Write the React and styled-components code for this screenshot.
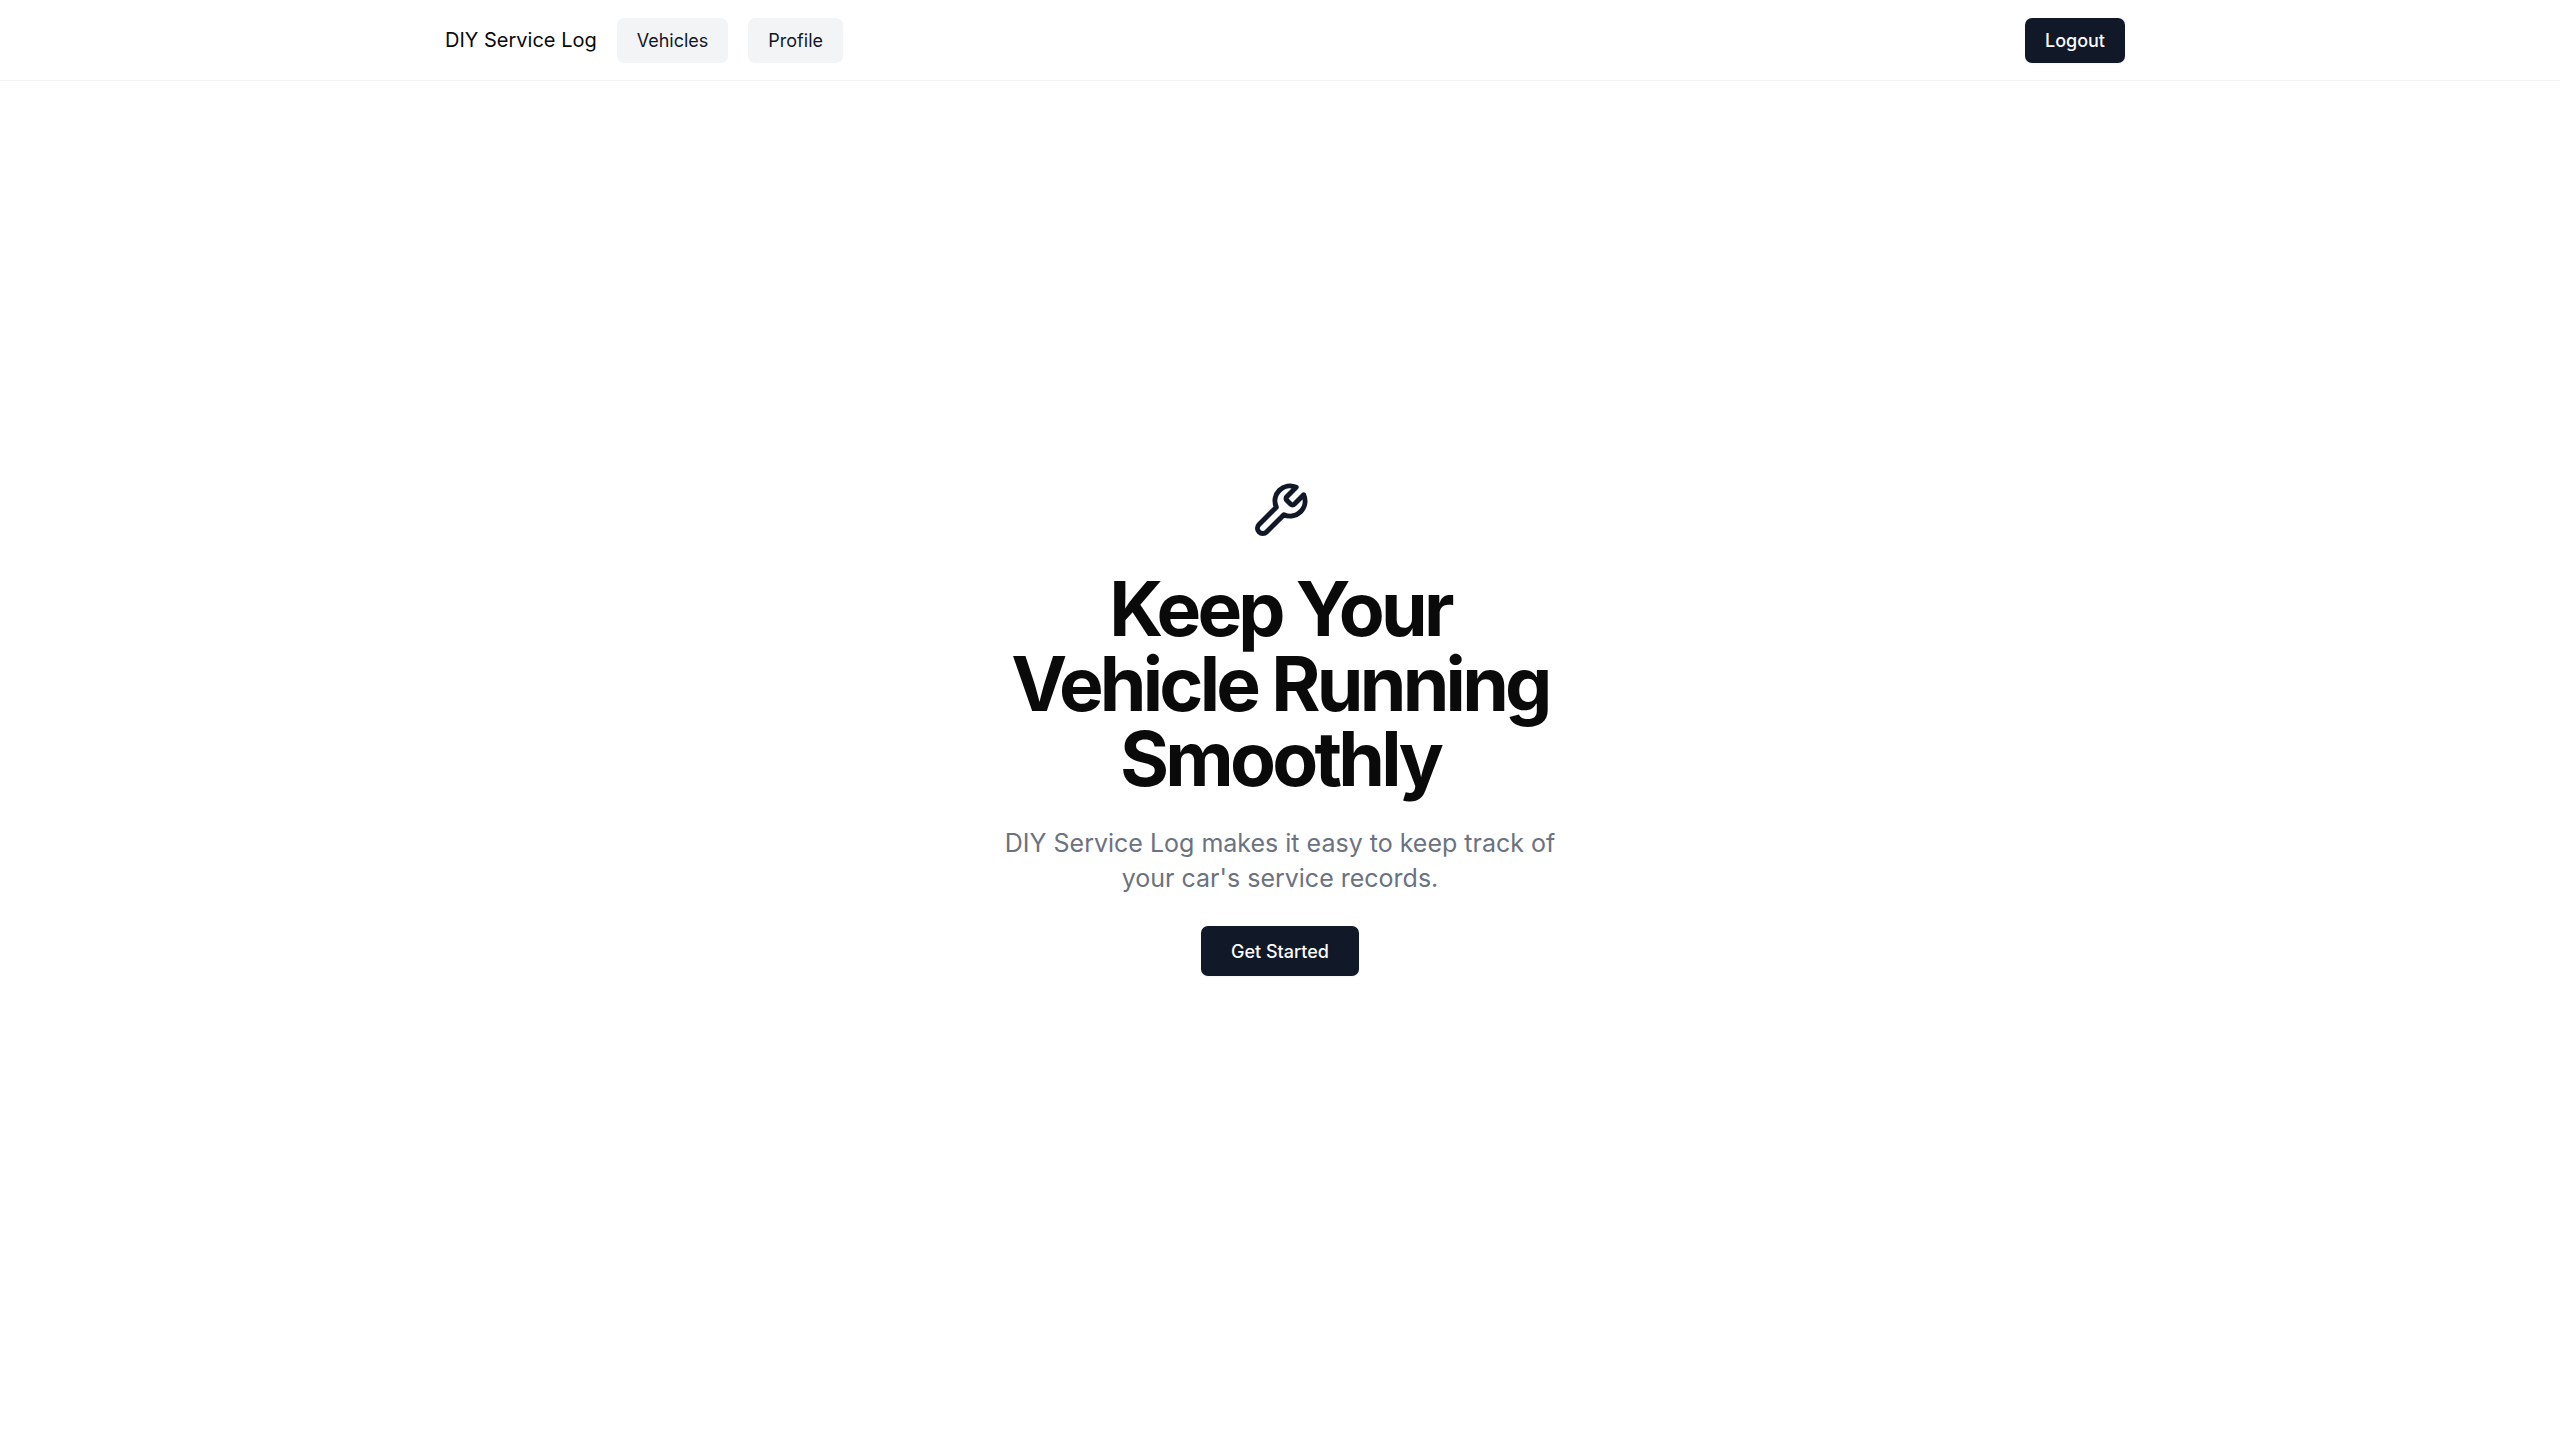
import React from "react";
import styled, { createGlobalStyle } from "styled-components";

const GlobalStyle = createGlobalStyle`
  *, *::before, *::after { box-sizing: border-box; }
  body {
    margin: 0;
    background: #ffffff;
    color: #0a0a0a;
    font-family: Inter, "Liberation Sans", sans-serif;
    font-size: 16px;
    line-height: 24px;
  }
`;

const Page = styled.div`
  display: flex;
  flex-direction: column;
  min-height: 100vh;
`;

const Header = styled.header`
  border-bottom: 1px solid #f3f4f6;
`;

const Bar = styled.div`
  display: flex;
  align-items: center;
  justify-content: space-between;
  max-width: 1760px;
  height: 80px;
  margin: 0 auto;
  padding: 0 35px 0 45px;
`;

const Nav = styled.nav`
  display: flex;
  align-items: center;
  gap: 20px;
`;

const Brand = styled.a`
  color: #0a0a0a;
  font-size: 20px;
  line-height: 28px;
  text-decoration: none;
`;

const variants = {
  primary: { background: "#111827", color: "#f9fafb", weight: 500 },
  secondary: { background: "#f3f4f6", color: "#111827", weight: 400 },
};

const Button = styled.button`
  display: inline-flex;
  align-items: center;
  justify-content: center;
  height: ${({ $large }) => ($large ? 50 : 45)}px;
  padding: 0 ${({ $large }) => ($large ? 30 : 20)}px;
  border: 0;
  border-radius: 7px;
  background: ${({ $variant }) => variants[$variant].background};
  box-shadow: ${({ $variant }) => ($variant === "primary" ? "0 1px 2px rgba(0, 0, 0, 0.05)" : "none")};
  color: ${({ $variant }) => variants[$variant].color};
  font-family: inherit;
  font-size: 18px;
  font-weight: ${({ $variant }) => variants[$variant].weight};
  line-height: 25px;
  cursor: pointer;
`;

const Hero = styled.main`
  display: flex;
  flex: 1;
  flex-direction: column;
  align-items: center;
  justify-content: center;
  padding-bottom: 64px;
  text-align: center;
`;

const HeroIcon = styled.svg`
  width: 60px;
  height: 60px;
  fill: none;
  stroke: #111827;
  stroke-width: 2;
  stroke-linecap: round;
  stroke-linejoin: round;
`;

const Title = styled.h1`
  max-width: 560px;
  margin: 30px 0;
  font-size: 75px;
  font-weight: 700;
  line-height: 75px;
  letter-spacing: -0.05em;
`;

const Lead = styled.p`
  max-width: 560px;
  margin: 0 0 30px;
  color: #6b7280;
  font-size: 25px;
  line-height: 35px;
`;

export default function App() {
  return (
    <Page>
      <GlobalStyle />
      <Header>
        <Bar>
          <Nav>
            <Brand href="#">DIY Service Log</Brand>
            <Button type="button" $variant="secondary">Vehicles</Button>
            <Button type="button" $variant="secondary">Profile</Button>
          </Nav>
          <Button type="button" $variant="primary">Logout</Button>
        </Bar>
      </Header>
      <Hero>
        <HeroIcon viewBox="0 0 24 24" aria-hidden="true">
          <path d="M14.7 6.3a1 1 0 0 0 0 1.4l1.6 1.6a1 1 0 0 0 1.4 0l3.77-3.77a6 6 0 0 1-7.94 7.94l-6.91 6.91a2.12 2.12 0 0 1-3-3l6.91-6.91a6 6 0 0 1 7.94-7.94l-3.76 3.76z" />
        </HeroIcon>
        <Title>Keep Your Vehicle Running Smoothly</Title>
        <Lead>DIY Service Log makes it easy to keep track of your car's service records.</Lead>
        <Button type="button" $variant="primary" $large>Get Started</Button>
      </Hero>
    </Page>
  );
}
